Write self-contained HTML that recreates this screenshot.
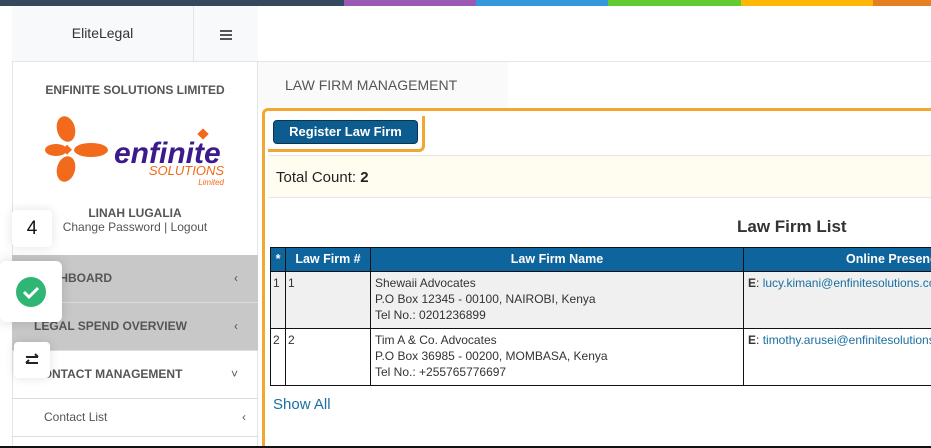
<!DOCTYPE html>
<html style="width:931px;height:448px;overflow:hidden"><head><style>
*{margin:0;padding:0;box-sizing:border-box}
body{width:931px;height:448px;overflow:hidden;background:#fff;font-family:"Liberation Sans",sans-serif;position:relative;color:#333}
.abs{position:absolute}
.bar{top:0;height:6px}
.menu{left:12px;width:246px;font-size:12px;font-weight:bold;color:#555;padding-left:22px;border-bottom:1px solid #ddd}
td,th{border:1px solid #111;vertical-align:top;font-size:12px;padding:3px 4px;line-height:16px;white-space:nowrap;overflow:hidden}
th{background:#0e649c;color:#fff;text-align:center;font-weight:bold;border-color:#111;font-size:12.5px}
</style></head><body>
<div class="abs bar" style="left:0;width:344px;background:#34495e"></div>
<div class="abs bar" style="left:344px;width:132px;background:#9b59b6"></div>
<div class="abs bar" style="left:476px;width:132px;background:#3498db"></div>
<div class="abs bar" style="left:608px;width:133px;background:#62cb31"></div>
<div class="abs bar" style="left:741px;width:132px;background:#ffb606"></div>
<div class="abs bar" style="left:873px;width:58px;background:#e67e22"></div>

<div class="abs" style="left:12px;top:6px;width:246px;height:442px;border-right:1px solid #e4e5e7;border-left:1px solid #e4e5e7"></div>
<div class="abs" style="left:12px;top:6px;width:246px;height:56px;background:#f7f9fa;border-bottom:1px solid #e4e5e7"></div>
<div class="abs" style="left:193px;top:6px;width:1px;height:56px;background:#e4e5e7"></div>
<div class="abs" style="left:12px;top:25px;width:181px;text-align:center;font-size:14px;color:#333">EliteLegal</div>
<div class="abs" style="left:220px;top:30px;width:12px;height:2px;background:#555;box-shadow:0 4px 0 #555,0 8px 0 #555"></div>
<div class="abs" style="left:258px;top:61px;width:673px;height:1px;background:#e4e5e7"></div>

<div class="abs" style="left:12px;top:83px;width:246px;text-align:center;font-size:12px;font-weight:bold;color:#555">ENFINITE SOLUTIONS LIMITED</div>
<svg class="abs" style="left:44px;top:114px" width="184" height="76" viewBox="0 0 184 76">
<g fill="#f26a1b"><ellipse cx="22" cy="15" rx="9" ry="13" transform="rotate(-15 22 15)"/><ellipse cx="22" cy="55" rx="9" ry="13" transform="rotate(15 22 55)"/><ellipse cx="12" cy="36" rx="11" ry="6"/><ellipse cx="47" cy="36" rx="17" ry="7"/><rect x="20" y="32" width="7" height="7" transform="rotate(45 23 35)"/><rect x="155" y="16" width="8" height="8" transform="rotate(45 159 20)"/></g>
<text x="70" y="49" font-family="Liberation Sans" font-weight="bold" font-style="italic" font-size="30" fill="#3c1a8c">enfinite</text>
<text x="180" y="61" text-anchor="end" font-family="Liberation Sans" font-style="italic" font-size="13" fill="#f26a1b">SOLUTIONS</text>
<text x="180" y="71" text-anchor="end" font-family="Liberation Sans" font-style="italic" font-size="8" fill="#f26a1b">Limited</text>
</svg>
<div class="abs" style="left:12px;top:206px;width:246px;text-align:center;font-size:12px;font-weight:bold;color:#555">LINAH LUGALIA</div>
<div class="abs" style="left:12px;top:220px;width:246px;text-align:center;font-size:12px;color:#555">Change Password | Logout</div>

<div class="abs menu" style="top:255px;height:48px;background:#c8c8c8;line-height:47px">DASHBOARD<span style="float:right;margin-right:20px;font-weight:normal">‹</span></div>
<div class="abs menu" style="top:303px;height:48px;background:#c8c8c8;line-height:47px">LEGAL SPEND OVERVIEW<span style="float:right;margin-right:20px;font-weight:normal">‹</span></div>
<div class="abs menu" style="top:351px;height:48px;line-height:47px">CONTACT MANAGEMENT<span style="float:right;margin-right:20px;font-weight:normal">˅</span></div>
<div class="abs menu" style="top:399px;height:38px;line-height:37px;font-weight:normal;padding-left:32px">Contact List<span style="float:right;margin-right:12px">‹</span></div>

<div class="abs" style="left:12px;top:210px;width:40px;height:37px;background:#fff;border-radius:4px;box-shadow:0 0 10px rgba(0,0,0,.12);font-size:19px;text-align:center;line-height:37px;color:#111">4</div>
<div class="abs" style="left:0;top:261px;width:62px;height:61px;background:#fff;border-radius:6px;box-shadow:0 0 12px rgba(0,0,0,.15)"></div>
<svg class="abs" style="left:16px;top:277px" width="30" height="30"><circle cx="15" cy="15" r="15" fill="#2fb574"/><path d="M8 15l5 5 9-9" stroke="#fff" stroke-width="3" fill="none"/></svg>
<div class="abs" style="left:14px;top:342px;width:36px;height:36px;background:#fff;border-radius:4px;box-shadow:0 0 10px rgba(0,0,0,.12)"></div>
<svg class="abs" style="left:22px;top:350px" width="20" height="20"><path d="M4 7h12M13 4l3 3M16 13H4M7 10l-3 3" stroke="#222" stroke-width="2" fill="none"/></svg>

<div class="abs" style="left:258px;top:62px;width:250px;height:46px;background:#fafafa"></div>
<div class="abs" style="left:285px;top:77px;font-size:14px;color:#555">LAW FIRM MANAGEMENT</div>

<div class="abs" style="left:262px;top:108px;width:669px;height:340px;border:3px solid #f0a830;border-right:none;border-bottom:none;border-radius:6px 0 0 0"></div>
<div class="abs" style="left:268px;top:116px;width:157px;height:36px;border:3px solid #f0a830;border-top:none;border-left:none;border-radius:0 0 6px 0"></div>
<div class="abs" style="left:273px;top:120px;width:145px;height:24px;background:#0c5c8f;border:1px solid #0a3550;border-radius:4px;color:#fff;font-size:13px;font-weight:bold;text-align:center;line-height:22px">Register Law Firm</div>
<div class="abs" style="left:268px;top:155px;width:663px;height:43px;background:#fffdf0;border-top:1px solid #e6e6e6;border-bottom:1px solid #e6e6e6;font-size:15px;line-height:43px;padding-left:8px;color:#222">Total Count: <b>2</b></div>
<div class="abs" style="left:737px;top:217px;font-size:17px;font-weight:bold;color:#333">Law Firm List</div>

<div class="abs" style="left:270px;top:247px;width:661px;height:140px;overflow:hidden">
<table style="border-collapse:collapse;width:800px;table-layout:fixed">
<tr style="height:24px"><th style="width:15px;padding:3px 1px">*</th><th style="width:85px">Law Firm #</th><th style="width:373px">Law Firm Name</th><th style="text-align:left;padding-left:102px">Online Presence</th></tr>
<tr style="height:57px;background:#f0f0f0"><td style="padding:3px 2px">1</td><td style="padding:3px 2px">1</td><td>Shewaii Advocates<br>P.O Box 12345 - 00100, NAIROBI, Kenya<br>Tel No.: 0201236899</td><td><b>E</b>: <span style="color:#1a6fa0">lucy.kimani@enfinitesolutions.com</span></td></tr>
<tr style="height:57px"><td style="padding:3px 2px">2</td><td style="padding:3px 2px">2</td><td>Tim A &amp; Co. Advocates<br>P.O Box 36985 - 00200, MOMBASA, Kenya<br>Tel No.: +255765776697</td><td><b>E</b>: <span style="color:#1a6fa0">timothy.arusei@enfinitesolutions.com</span></td></tr>
</table></div>
<div class="abs" style="left:273px;top:396px;font-size:15px;color:#1a6fa0">Show All</div>
<div class="abs" style="left:0;top:446px;width:931px;height:2px;background:#111"></div>
</body></html>
